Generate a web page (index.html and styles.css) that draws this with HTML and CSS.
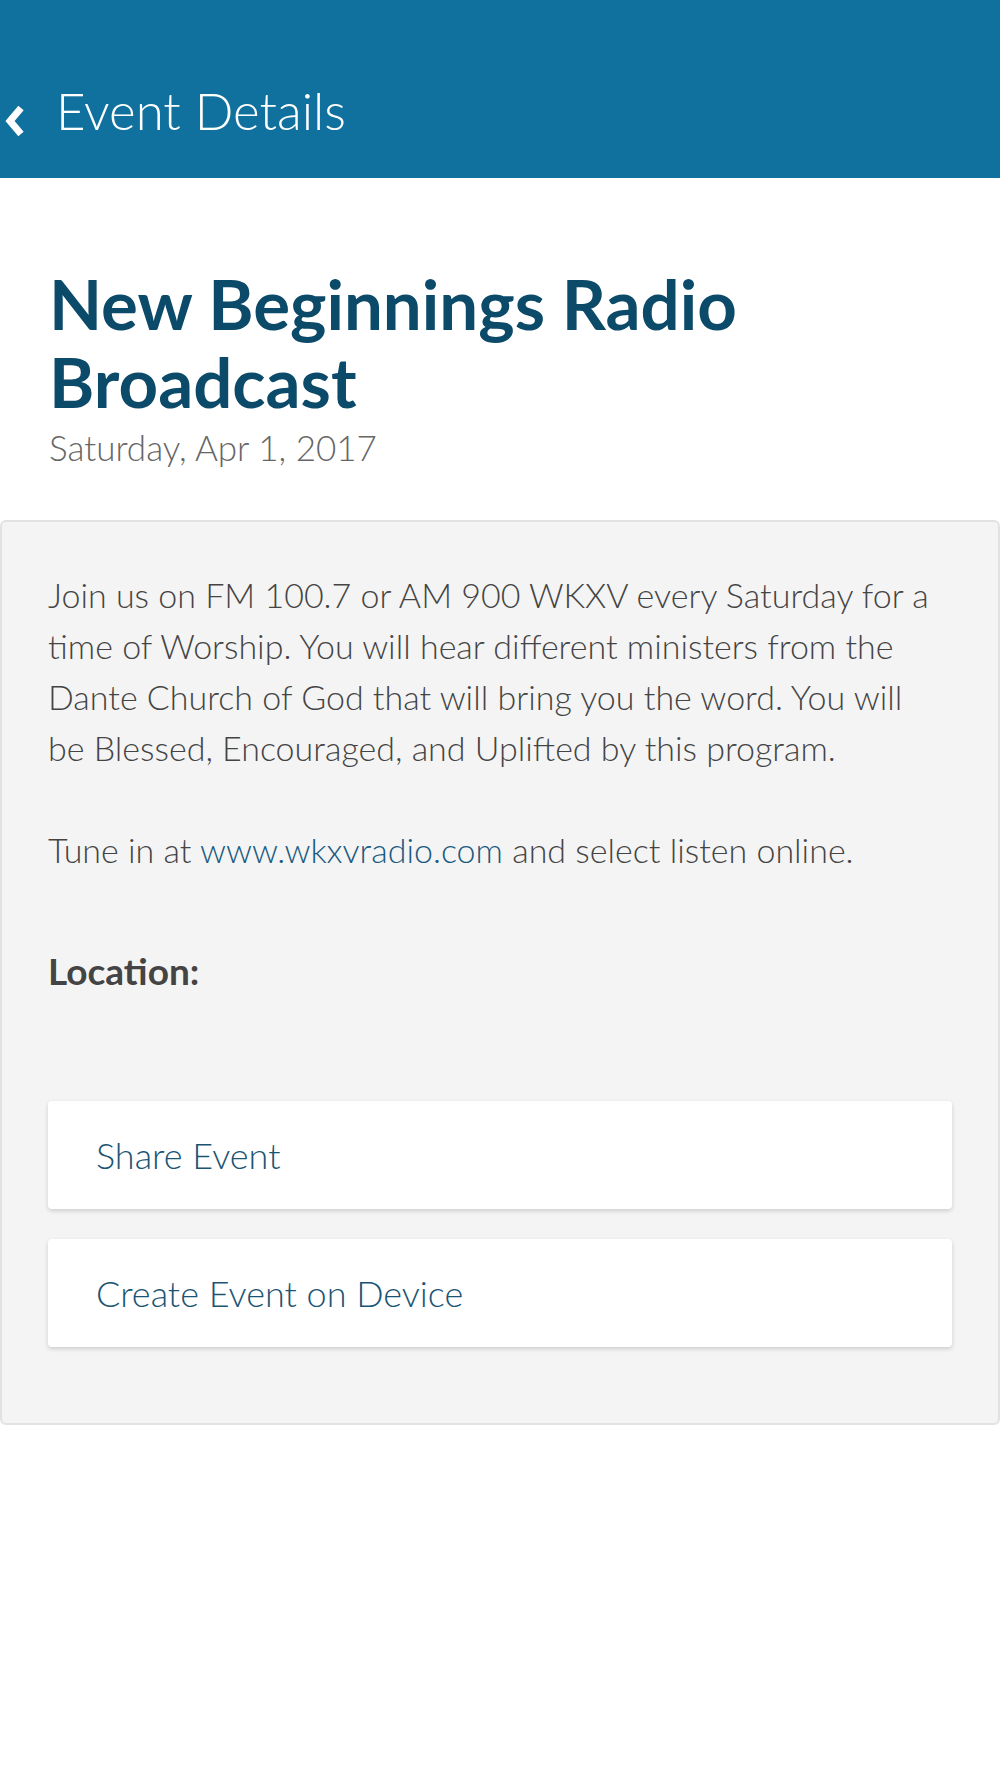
FILE: index.html
```html
<!DOCTYPE html>
<html lang="en">
<head>
  <meta charset="UTF-8">
  <title>Event Details</title>
  <link rel="stylesheet" href="styles.css">
</head>
<body>
  <header class="topbar">
    <a class="back" href="#">
      <svg width="20" height="32" viewBox="0 0 20 32"><path d="M16 3 L5 16 L16 29" fill="none" stroke="#fff" stroke-width="7" stroke-linejoin="miter"/></svg>
    </a>
    <h1 class="topbar-title">Event Details</h1>
  </header>

  <section class="event-head">
    <h2 class="event-title">New Beginnings Radio Broadcast</h2>
    <div class="event-date">Saturday, Apr 1, 2017</div>
  </section>

  <section class="event-panel">
    <p>Join us on FM 100.7 or AM 900 WKXV every Saturday for a time of Worship. You will hear different ministers from the Dante Church of God that will bring you the word. You will be Blessed, Encouraged, and Uplifted by this program.</p>
    <p>Tune in at <a href="#">www.wkxvradio.com</a> and select listen online.</p>
    <div class="location">Location:</div>
    <div class="actions">
      <a class="action-btn" href="#">Share Event</a>
      <a class="action-btn" href="#">Create Event on Device</a>
    </div>
  </section>
</body>
</html>
```

FILE: styles.css
```css
body {
  margin: 0;
  background: #fff;
  font-family: Lato, "Open Sans", sans-serif;
  color: #444;
}

.topbar {
  height: 178px;
  background: #10709e;
  display: flex;
  align-items: center;
  padding-top: 42px;
  box-sizing: border-box;
}

.back {
  display: flex;
  margin-left: 5px;
  margin-right: 31px;
  margin-top: 22px;
}

.topbar-title {
  margin: 0;
  font-weight: 300;
  font-size: 51px;
  color: #fff;
}

.event-head {
  padding: 87px 49px 47px;
}

.event-title {
  margin: 0;
  font-size: 69px;
  line-height: 78px;
  font-weight: 700;
  color: #0b4a69;
}

.event-date {
  font-size: 35px;
  font-weight: 300;
  color: #666;
  line-height: 52px;
}

.event-panel {
  background: #f4f4f4;
  border: 2px solid #e2e2e2;
  border-radius: 6px;
  padding: 47px 58px 76px 46px;
}

.event-panel p {
  margin: 0 0 51px;
  font-size: 34px;
  line-height: 51px;
  font-weight: 300;
}

.event-panel p a {
  color: #1a5a80;
  text-decoration: none;
}

.location {
  margin-top: 73px;
  font-size: 37px;
  font-weight: 700;
  color: #444;
}

.actions {
  margin-top: 108px;
  margin-right: -12px;
  display: flex;
  flex-direction: column;
  gap: 30px;
}

.action-btn {
  display: flex;
  align-items: center;
  height: 108px;
  padding-left: 48px;
  background: #fff;
  border-radius: 4px;
  box-shadow: 0 2px 4px rgba(0, 0, 0, 0.16);
  font-size: 36px;
  font-weight: 300;
  color: #1a5474;
  text-decoration: none;
}
```
